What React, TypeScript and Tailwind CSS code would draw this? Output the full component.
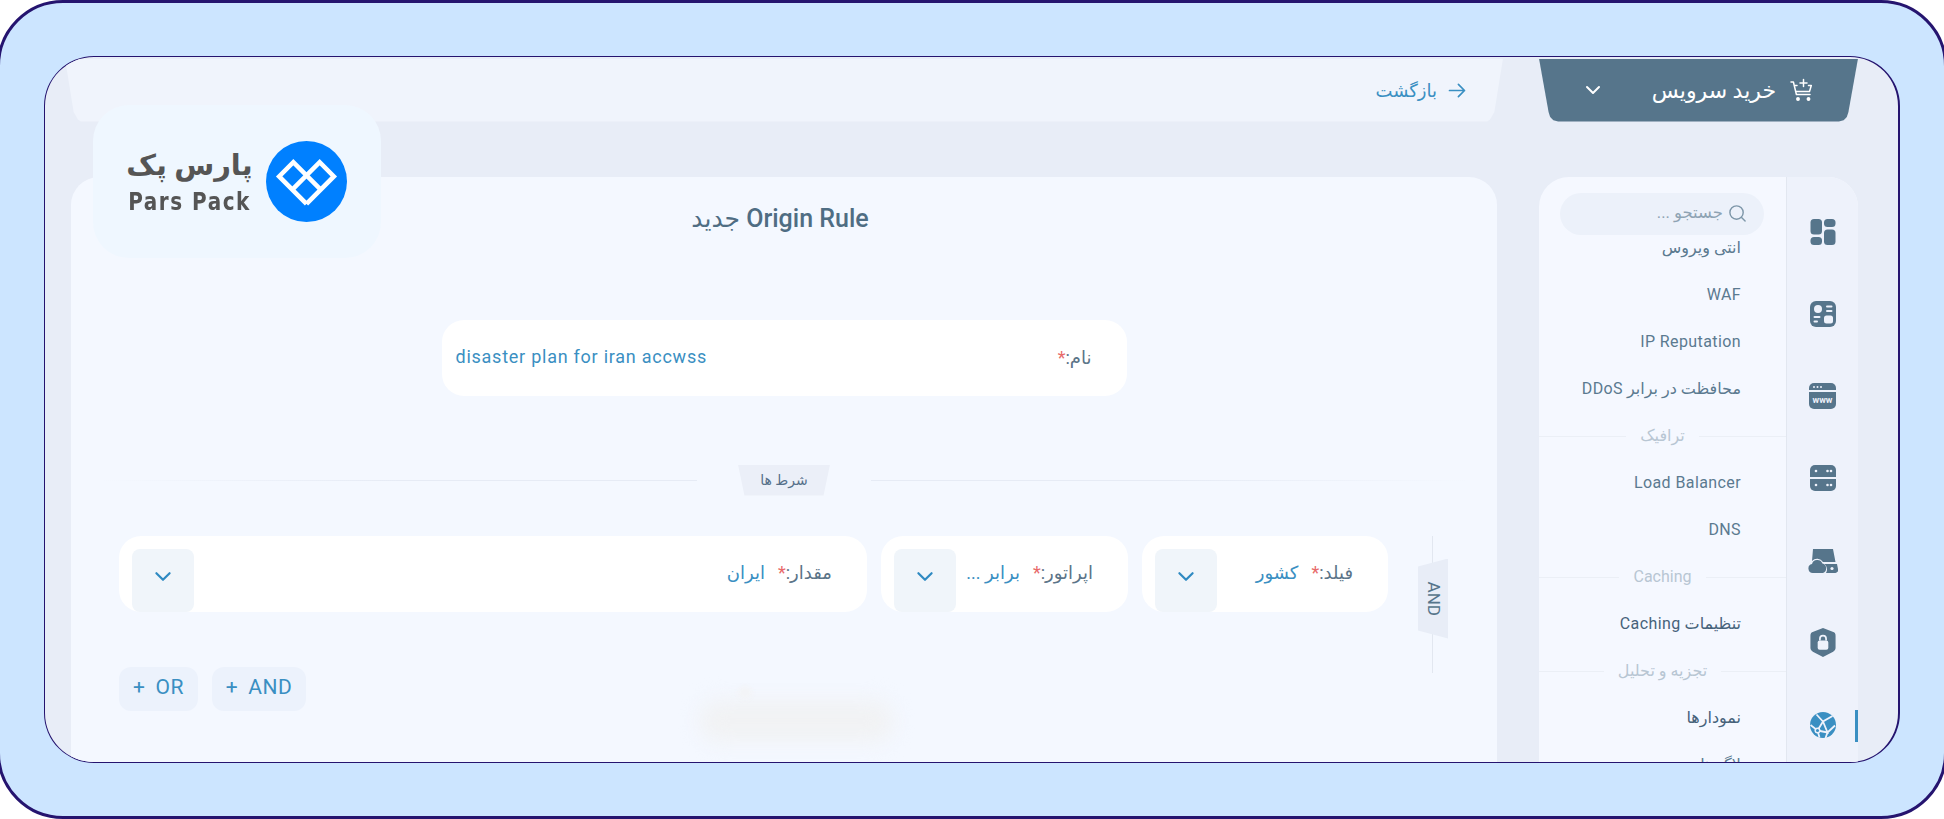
import React from "react";

const font = "font-['Roboto','DejaVu_Sans',sans-serif]";

const slate = "#56758b";
const panel = "#eef2fb";

function ChevronDown({ className }: { className?: string }) {
  return (
    <svg viewBox="0 0 16 10" className={className} fill="none" stroke="currentColor" strokeWidth="2" strokeLinecap="round" strokeLinejoin="round">
      <path d="M2 2l6 6 6-6" />
    </svg>
  );
}

function PlusCart() {
  return (
    <svg viewBox="0 0 24 24" className="h-[24px] w-[24px]" fill="none" stroke="#fff" strokeWidth="1.5" strokeLinecap="round" strokeLinejoin="round">
      <path d="M1 4h2.4l3 12.5h13.6" />
      <path d="M5 7.5h2M18.5 7.5l2.8 0-1.8 6H6" />
      <path d="M13.5 1.5v7M10 5h7" />
      <circle cx="8" cy="21" r="1.2" fill="#fff" />
      <circle cx="18.5" cy="21" r="1.2" fill="#fff" />
    </svg>
  );
}

function Logo() {
  return (
    <svg viewBox="0 0 80 80" className="h-[81px] w-[81px]">
      <circle cx="40" cy="40" r="40" fill="#0080ff" />
      <path d="M40 62L13 35 27 21 54 48M40 62L67 35 53 21 26 48" fill="none" stroke="#fff" strokeWidth="4.5" strokeLinejoin="miter" />
    </svg>
  );
}

const navIcons = [
  <svg viewBox="0 0 26 26" className="h-[26px] w-[26px]" fill={slate} key="grid">
    <rect x="0.5" y="0" width="11.5" height="15.5" rx="3.5" />
    <rect x="0.5" y="18" width="11.5" height="8" rx="3.5" />
    <rect x="14" y="0" width="11.5" height="8" rx="3.5" />
    <rect x="14" y="10.5" width="11.5" height="15.5" rx="3.5" />
  </svg>,
  <svg viewBox="0 0 26 26" className="h-[26px] w-[26px]" key="panel">
    <rect x="0" y="0" width="26" height="26" rx="6" fill={slate} />
    <circle cx="8" cy="8" r="4" fill={panel} />
    <rect x="16" y="4.5" width="6.5" height="2" rx="1" fill={panel} />
    <rect x="16" y="9" width="6.5" height="2" rx="1" fill={panel} />
    <rect x="3.5" y="15" width="7" height="2" rx="1" fill={panel} />
    <rect x="3.5" y="19.5" width="4.5" height="2" rx="1" fill={panel} />
    <rect x="14" y="14.5" width="9" height="8" rx="2.5" fill={panel} />
  </svg>,
  <svg viewBox="0 0 27 26" className="h-[26px] w-[27px]" key="www">
    <path d="M5 0h17a5 5 0 0 1 5 5v2H0V5a5 5 0 0 1 5-5z" fill={slate} />
    <path d="M0 9h27v12a5 5 0 0 1-5 5H5a5 5 0 0 1-5-5z" fill={slate} />
    <circle cx="5" cy="4" r="1" fill={panel} />
    <circle cx="8.5" cy="4" r="1" fill={panel} />
    <circle cx="12" cy="4" r="1" fill={panel} />
    <text x="13.5" y="20" textAnchor="middle" fontSize="9" fontWeight="700" fontFamily="Roboto" fill={panel}>www</text>
  </svg>,
  <svg viewBox="0 0 26 26" className="h-[26px] w-[26px]" key="server">
    <path d="M5 0h16a5 5 0 0 1 5 5v7H0V5a5 5 0 0 1 5-5z" fill={slate} />
    <path d="M0 14h26v7a5 5 0 0 1-5 5H5a5 5 0 0 1-5-5z" fill={slate} />
    <circle cx="6" cy="6" r="1.3" fill={panel} />
    <circle cx="17.5" cy="6" r="1.3" fill={panel} />
    <circle cx="21" cy="6" r="1.3" fill={panel} />
    <circle cx="6" cy="20" r="1.3" fill={panel} />
    <circle cx="17.5" cy="20" r="1.3" fill={panel} />
    <circle cx="21" cy="20" r="1.3" fill={panel} />
  </svg>,
  <svg viewBox="0 0 30 24" className="h-[24px] w-[30px]" key="cloud">
    <path d="M5 0h20l2.5 13H15a7 7 0 0 0-11-1z" fill={slate} />
    <path d="M16.5 15h12.5l1 5a3 3 0 0 1-3 4H18a7 7 0 0 0-1.5-9z" fill={slate} />
    <path d="M5 24a4.5 4.5 0 0 1-1-8.9 5.5 5.5 0 0 1 10.4-.6 5 5 0 0 1 .6 9.5z" fill={slate} />
    <circle cx="24" cy="19.5" r="1.6" fill={panel} />
  </svg>,
  <svg viewBox="0 0 26 30" className="h-[29px] w-[26px]" key="lock">
    <path d="M13 0l10 4a4 4 0 0 1 3 4v13a4 4 0 0 1-2.5 3.5L13 30 2.500 24.500A4 4 0 0 1 0 21V8a4 4 0 0 1 3-4z" fill={slate} />
    <rect x="7.500" y="13" width="11" height="9.500" rx="2" fill={panel} />
    <path d="M9.800 13v-2a3.200 3.200 0 0 1 6.400 0v2" fill="none" stroke={panel} strokeWidth="1.800" />
  </svg>,
  <svg viewBox="0 0 26 26" className="h-[26px] w-[26px]" key="globe">
    <circle cx="13" cy="13" r="13" fill="#3a8fc2" />
    <path d="M0.500 13l7 5.500L13 9.500 6.500 2.500M7.500 18.500L17.500 20.500 13 9.500 22.500 4M17.500 20.500L25 13.500M7.500 18.500L9.500 25.500M17.500 20.500L15.500 26" fill="none" stroke={panel} strokeWidth="1.800" />
    <circle cx="7.500" cy="18.500" r="3" fill={panel} />
    <circle cx="7.500" cy="18.500" r="1.500" fill="#3a8fc2" />
  </svg>,
];

function NavItem({ label, dark }: { label: string; dark?: boolean }) {
  return (
    <div className={`flex h-[47px] items-center pr-[45px] text-[16px] tracking-[0.4px] ${dark ? "text-[#46627a]" : "text-[#5b7a90]"}`}>
      {label}
    </div>
  );
}

function NavSection({ label }: { label: string }) {
  return (
    <div className="flex h-[47px] items-center gap-[14px] text-[16px] text-[#b8c6d3]">
      <span className="h-px flex-1 bg-[#ebeff6]" />
      <span>{label}</span>
      <span className="h-px flex-1 bg-[#ebeff6]" />
    </div>
  );
}

function SelectField({ label, value, className }: { label: string; value: string; className: string }) {
  return (
    <div className={`flex h-[76px] items-start rounded-[22px] bg-white pr-[35px] pl-[13px] ${className}`}>
      <div className="flex h-[74px] items-center gap-[13px] text-[18px] whitespace-nowrap">
        <span className="text-[#5b7488]">
          {label}:<span className="text-[#e86a6a]">*</span>
        </span>
        <span className="text-[#3a8fc2]">{value}</span>
      </div>
      <div className="mt-[13px] mr-auto flex h-[63px] w-[62px] items-start justify-center rounded-[8px] bg-[#f0f5fa] pt-[22px] text-[#2f8ac2]">
        <ChevronDown className="h-[11px] w-[18px]" />
      </div>
    </div>
  );
}

export default function App() {
  return (
    <div dir="rtl" className={`h-[819px] w-[1944px] overflow-hidden bg-white ${font}`}>
      {/* frame runs just past the window on both sides, so only its top and bottom lines show */}
      <div className="-mx-[3px] h-full rounded-[66px] border-[3px] border-[#25146f] bg-[#cce5ff] px-[44px] pt-[53px] pb-[53px]">
        <div className="relative flex h-[707px] overflow-hidden rounded-[50px] border-[1.500px] border-r-[2.500px] border-[#25146f] bg-[#e8edf7] pr-[40px] pl-[26px]">
          {/* right column: buy button + sidebar */}
          <aside className="flex w-[319px] shrink-0 flex-col">
            <button className="mt-[1.500px] flex h-[63px] items-center justify-between bg-[#56758b] pr-[44px] pl-[46px] text-white [clip-path:polygon(0_0,100%_0,97%_85%,96.500%_93%,95.500%_98%,94%_100%,6%_100%,4.500%_98%,3.500%_93%,3%_85%)]">
              <span className="flex items-center gap-[14px] text-[22px] font-medium">
                <PlusCart />
                خرید سرویس
              </span>
              <ChevronDown className="h-[10px] w-[16px]" />
            </button>
            <div className="mt-[55px] flex min-h-0 flex-1 overflow-hidden rounded-t-[30px] bg-[#f5f8ff]">
              <div className="relative flex w-[72px] shrink-0 flex-col items-center gap-[56.300px] border-l border-[#e2e7f0] bg-[#eef2fb] pt-[42px]">
                {navIcons.map((icon, i) => (
                  <div key={i} className="flex h-[26px] items-center justify-center">{icon}</div>
                ))}
                <span className="absolute top-[533px] right-0 h-[32px] w-[3px] bg-[#3a8fc2]" />
              </div>
              <div className="min-w-0 flex-1">
                <div className="pt-[16px] pr-[22px] pl-[21px]">
                  <div className="flex h-[42px] items-center gap-[5px] rounded-full bg-[#ecf1fa] pr-[17px] text-[16.500px] text-[#8ea3b3]">
                    <svg viewBox="0 0 20 20" className="h-[19px] w-[19px]" fill="none" stroke="#7e97a9" strokeWidth="1.500" strokeLinecap="round">
                      <circle cx="9" cy="9" r="7" />
                      <path d="M14 14l4 4" />
                    </svg>
                    جستجو ...
                  </div>
                </div>
                <div className="mt-[6px] h-[600px] overflow-hidden">
                  <div className="-mt-[16px]">
                    <NavItem label="آنتی ویروس" />
                    <NavItem label="WAF" />
                    <NavItem label="IP Reputation" />
                    <NavItem label="محافظت در برابر DDoS" />
                    <NavSection label="ترافیک" />
                    <NavItem label="Load Balancer" />
                    <NavItem label="DNS" />
                    <NavSection label="Caching" />
                    <NavItem label="تنظیمات Caching" dark />
                    <NavSection label="تجزیه و تحلیل" />
                    <NavItem label="نمودارها" dark />
                    <NavItem label="لاگ ها" />
                  </div>
                </div>
              </div>
            </div>
          </aside>

          {/* main column */}
          <main className="mr-[42px] flex min-w-0 flex-1 flex-col">
            <div className="-mx-[6px] mt-[1.500px] flex h-[63px] items-center bg-[#f0f4fc] pr-[37px] text-[18px] text-[#3a8fc2] [clip-path:polygon(0_0,100%_0,99.400%_85%,99.100%_97%,98.900%_100%,1.100%_100%,0.900%_97%,0.600%_85%)]">
              <span className="flex items-center gap-[11px]">
                <svg viewBox="0 0 18 16" className="h-[15px] w-[18px]" fill="none" stroke="currentColor" strokeWidth="1.800" strokeLinecap="round" strokeLinejoin="round">
                  <path d="M1 8h16M10.500 1.500L17 8l-6.500 6.500" />
                </svg>
                بازگشت
              </span>
            </div>
            <div className="relative mt-[55px] flex-1 rounded-t-[28px] bg-[#f4f8ff] px-[30px]">
              <h1 className="pt-[27px] pr-[8px] text-center text-[25px] leading-[30px] font-medium text-[#4f6d83]">Origin Rule جدید</h1>

              <div className="mt-[86px] flex justify-center">
                <div className="flex h-[76px] w-[685px] items-center rounded-[22px] bg-white pr-[35px] pl-[14px] text-[18px]">
                  <span className="text-[#5b7488]">
                    نام:<span className="text-[#e86a6a]">*</span>
                  </span>
                  <span dir="ltr" className="mr-auto pb-[3px] tracking-[0.75px] text-[#3a8fc2]">disaster plan for iran accwss</span>
                </div>
              </div>

              <div className="mt-[69px] flex items-center">
                <span className="h-px flex-1 bg-gradient-to-r from-[#e6ebf5] via-[#e6ebf5] to-transparent" />
                <span className="mx-[41px] flex h-[31px] w-[92px] items-center justify-center bg-[#ebeff8] text-[14px] text-[#56708a] [clip-path:polygon(0_0,100%_0,93%_100%,7%_100%)]">شرط ها</span>
                <span className="h-px flex-1 bg-gradient-to-l from-[#e6ebf5] via-[#e6ebf5] to-transparent" />
              </div>

              <div className="mt-[40px] flex gap-[14px]">
                <div className="relative w-[65px] shrink-0">
                  <span className="absolute top-0 right-[34px] h-[137px] w-px bg-[#e2e7f0]" />
                  <span className="absolute top-[23px] right-[19px] flex h-[80px] w-[30px] items-center justify-center bg-[#e8edf7] text-[17px] text-[#56758b] [clip-path:polygon(0_10%,100%_0,100%_100%,0_90%)]">
                    <span className="rotate-90">AND</span>
                  </span>
                </div>
                <SelectField label="فیلد" value="کشور" className="w-[246px] shrink-0" />
                <SelectField label="اپراتور" value="برابر ..." className="w-[247px] shrink-0" />
                <SelectField label="مقدار" value="ایران" className="w-[748px] shrink-0" />
              </div>

              <div dir="ltr" className="mt-[55px] flex gap-[14px] pl-[18px] text-[21px] tracking-[0.5px] text-[#3a8fc2]">
                <button className="flex h-[44px] w-[79px] items-center justify-center gap-[10px] rounded-[12px] bg-[#ecf2fc] pb-[2px]">
                  <span>+</span>OR
                </button>
                <button className="flex h-[44px] w-[94px] items-center justify-center gap-[10px] rounded-[12px] bg-[#ecf2fc] pb-[2px]">
                  <span>+</span>AND
                </button>
              </div>

              {/* blurred-out patch */}
              <div className="absolute top-[523px] left-[628px] h-[42px] w-[195px] rounded-[20px] bg-[#f1f2f4] blur-[10px]" />
              <div className="absolute top-[509px] left-[667px] h-[14px] w-[14px] rounded-full bg-[#f3f4f7] blur-[2px]" />
            </div>
          </main>

          {/* logo tile */}
          <div dir="ltr" className="absolute top-[47.500px] left-[47.500px] flex h-[153px] w-[288px] items-center justify-center gap-[15px] rounded-[36px] bg-[#eff7ff] pl-[2px]">
            <div className="flex w-[122px] flex-col items-center whitespace-nowrap text-[#555]">
              <span dir="rtl" className="-mt-[2px] text-[29px] leading-[34px] font-bold">پارس پک</span>
              <span className="mt-[8px] scale-y-125 font-['DejaVu_Sans',sans-serif] text-[20px] leading-[22px] font-bold tracking-[1.5px]">Pars Pack</span>
            </div>
            <Logo />
          </div>
        </div>
      </div>
    </div>
  );
}
